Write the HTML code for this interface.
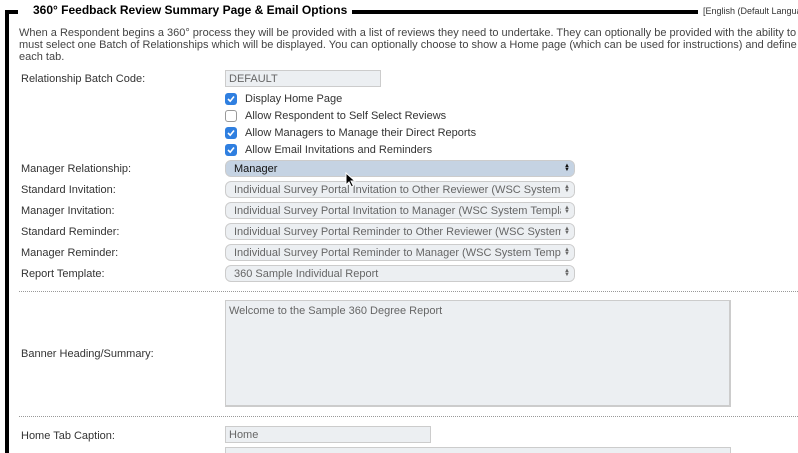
<!DOCTYPE html>
<html><head><style>
*{box-sizing:border-box;margin:0;padding:0}
html,body{width:798px;height:453px;overflow:hidden}
body{background:#fff;font-family:"Liberation Sans",Arial,sans-serif;font-size:11px;color:#333;position:relative}
.a{position:absolute}
.lbl{position:absolute;left:21px;font-size:11px;color:#333}
.sel{position:absolute;left:225px;width:350px;height:17px;border:1px solid #ccc;border-radius:6px;background:#eceff2;color:#666;padding-left:8px;line-height:16px;font-size:11px;white-space:nowrap;overflow:hidden}
.sel:after{content:"";position:absolute;right:0;top:0;width:13px;height:15px;background:inherit}
.arr{position:absolute;right:4px;top:3px;font-size:6px;line-height:4px;color:#666;z-index:2}
.cb{position:absolute;left:225px;width:12px;height:12px;border-radius:3px;background:#2f7fe0}
.cb.off{background:#fff;border:1px solid #999}
.cb svg{position:absolute;left:2px;top:2px}
.ct{position:absolute;left:245px;color:#333}
.dot{position:absolute;left:19px;right:0;border-top:1px dotted #999}
.inp{position:absolute;left:225px;border:1px solid #ccc;background:#eceff2;color:#666;padding-left:3px;line-height:16px}
</style></head><body>
<div class="a" style="left:5px;top:10px;width:4px;height:443px;background:#000"></div>
<div class="a" style="left:5px;top:10px;width:693px;height:4px;background:#000"></div>
<div class="a" style="left:18px;top:3px;padding:0 5px 0 15px;background:#fff;font-size:12px;font-weight:bold;color:#000;white-space:nowrap">360° Feedback Review Summary Page &amp; Email Options</div>
<div class="a" style="left:703px;top:6px;font-size:9px;color:#333;white-space:nowrap">[English (Default Language)]</div>
<div class="a" style="left:19px;top:27px;width:790px;line-height:12px;color:#444;white-space:nowrap">When a Respondent begins a 360° process they will be provided with a list of reviews they need to undertake. They can optionally be provided with the ability to<br>must select one Batch of Relationships which will be displayed. You can optionally choose to show a Home page (which can be used for instructions) and define<br>each tab.</div>
<div class="lbl" style="top:73px">Relationship Batch Code:</div>
<div class="inp" style="top:70px;width:156px;height:17px">DEFAULT</div>
<div class="cb" style="top:93px"><svg width="8" height="8"><path d="M1 4 L3.2 6.2 L7 1.5" stroke="#fff" stroke-width="1.6" fill="none"/></svg></div><div class="ct" style="top:93px">Display Home Page</div>
<div class="cb off" style="top:110px"></div><div class="ct" style="top:110px">Allow Respondent to Self Select Reviews</div>
<div class="cb" style="top:127px"><svg width="8" height="8"><path d="M1 4 L3.2 6.2 L7 1.5" stroke="#fff" stroke-width="1.6" fill="none"/></svg></div><div class="ct" style="top:127px">Allow Managers to Manage their Direct Reports</div>
<div class="cb" style="top:144px"><svg width="8" height="8"><path d="M1 4 L3.2 6.2 L7 1.5" stroke="#fff" stroke-width="1.6" fill="none"/></svg></div><div class="ct" style="top:144px">Allow Email Invitations and Reminders</div>
<div class="lbl" style="top:163px">Manager Relationship:</div>
<div class="sel" style="top:160px;background:#c5d3e3;color:#111"><span class="arr" style="color:#111">▲<br>▼</span>Manager</div>
<div class="lbl" style="top:184px">Standard Invitation:</div>
<div class="sel" style="top:181px"><span class="arr">▲<br>▼</span>Individual Survey Portal Invitation to Other Reviewer (WSC System Template)</div>
<div class="lbl" style="top:205px">Manager Invitation:</div>
<div class="sel" style="top:202px"><span class="arr">▲<br>▼</span>Individual Survey Portal Invitation to Manager (WSC System Template)</div>
<div class="lbl" style="top:226px">Standard Reminder:</div>
<div class="sel" style="top:223px"><span class="arr">▲<br>▼</span>Individual Survey Portal Reminder to Other Reviewer (WSC System Template)</div>
<div class="lbl" style="top:247px">Manager Reminder:</div>
<div class="sel" style="top:244px"><span class="arr">▲<br>▼</span>Individual Survey Portal Reminder to Manager (WSC System Template)</div>
<div class="lbl" style="top:268px">Report Template:</div>
<div class="sel" style="top:265px"><span class="arr">▲<br>▼</span>360 Sample Individual Report</div>
<svg class="a" style="left:345px;top:172px" width="12" height="17"><path d="M1 1 L1 13 L4 10 L6.5 15 L8.5 14 L6 9 L10 9 Z" fill="#000" stroke="#fff" stroke-width="1"/></svg>
<div class="dot" style="top:291px"></div>
<div class="lbl" style="top:348px">Banner Heading/Summary:</div>
<div class="inp" style="top:300px;width:506px;height:107px;padding-top:2px;border-width:1px 2px 2px 1px">Welcome to the Sample 360 Degree Report</div>
<div class="dot" style="top:416px"></div>
<div class="lbl" style="top:430px">Home Tab Caption:</div>
<div class="inp" style="top:426px;width:206px;height:17px">Home</div>
<div class="inp" style="top:447px;width:506px;height:20px"></div>
</body></html>
